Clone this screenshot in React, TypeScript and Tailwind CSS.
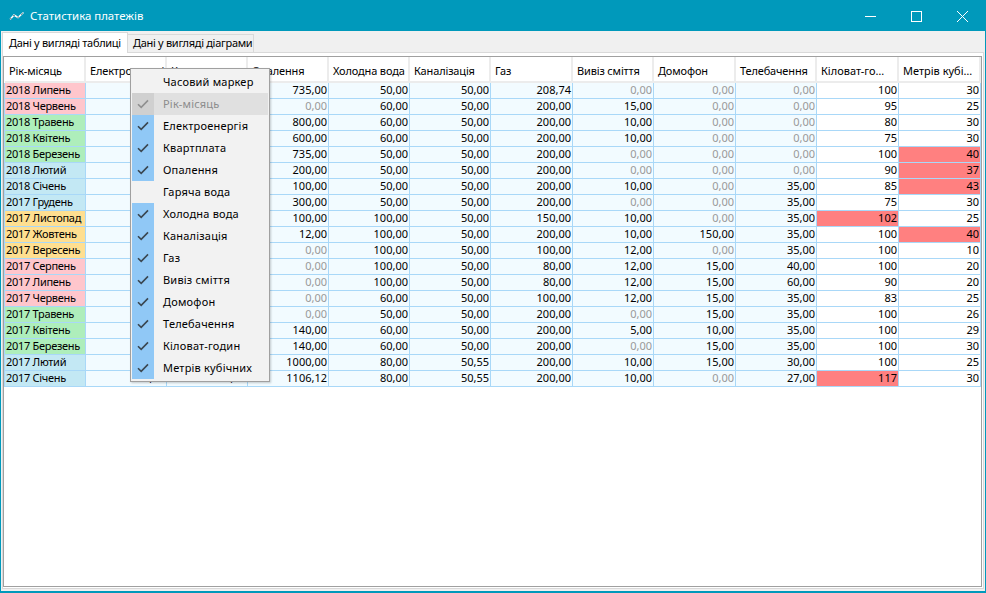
import React from 'react';

type Row = { label: string; tone: string; cells: string[] };

const toneClass: Record<string, string> = {
  pink: 'bg-[#ffc6cc]',
  green: 'bg-[#aeeebb]',
  blue: 'bg-[#c3e8f4]',
  yellow: 'bg-[#ffdf90]',
};

const headers = [
  'Рік-місяць',
  'Електроенергія',
  'Квартплата',
  'Опалення',
  'Холодна вода',
  'Каналізація',
  'Газ',
  'Вивіз сміття',
  'Домофон',
  'Телебачення',
  'Кіловат-го…',
  'Метрів кубі…',
];

const rows: Row[] = [
  { label: '2018 Липень', tone: 'pink', cells: ['735,00', '50,00', '50,00', '208,74', '0,00', '0,00', '0,00', '100', '30'] },
  { label: '2018 Червень', tone: 'pink', cells: ['0,00', '60,00', '50,00', '200,00', '15,00', '0,00', '0,00', '95', '25'] },
  { label: '2018 Травень', tone: 'green', cells: ['800,00', '60,00', '50,00', '200,00', '10,00', '0,00', '0,00', '80', '30'] },
  { label: '2018 Квітень', tone: 'green', cells: ['600,00', '60,00', '50,00', '200,00', '10,00', '0,00', '0,00', '75', '30'] },
  { label: '2018 Березень', tone: 'green', cells: ['735,00', '50,00', '50,00', '200,00', '0,00', '0,00', '0,00', '100', '40!'] },
  { label: '2018 Лютий', tone: 'blue', cells: ['200,00', '50,00', '50,00', '200,00', '0,00', '0,00', '0,00', '90', '37!'] },
  { label: '2018 Січень', tone: 'blue', cells: ['100,00', '50,00', '50,00', '200,00', '10,00', '0,00', '35,00', '85', '43!'] },
  { label: '2017 Грудень', tone: 'blue', cells: ['300,00', '50,00', '50,00', '200,00', '0,00', '0,00', '35,00', '75', '30'] },
  { label: '2017 Листопад', tone: 'yellow', cells: ['100,00', '100,00', '50,00', '150,00', '10,00', '0,00', '35,00', '102!', '25'] },
  { label: '2017 Жовтень', tone: 'yellow', cells: ['12,00', '100,00', '50,00', '200,00', '10,00', '150,00', '35,00', '100', '40!'] },
  { label: '2017 Вересень', tone: 'yellow', cells: ['0,00', '100,00', '50,00', '100,00', '12,00', '0,00', '35,00', '100', '10'] },
  { label: '2017 Серпень', tone: 'pink', cells: ['0,00', '100,00', '50,00', '80,00', '12,00', '15,00', '40,00', '100', '20'] },
  { label: '2017 Липень', tone: 'pink', cells: ['0,00', '100,00', '50,00', '80,00', '12,00', '15,00', '60,00', '90', '20'] },
  { label: '2017 Червень', tone: 'pink', cells: ['0,00', '60,00', '50,00', '100,00', '12,00', '15,00', '35,00', '83', '25'] },
  { label: '2017 Травень', tone: 'green', cells: ['0,00', '50,00', '50,00', '200,00', '0,00', '15,00', '35,00', '100', '26'] },
  { label: '2017 Квітень', tone: 'green', cells: ['140,00', '60,00', '50,00', '200,00', '5,00', '10,00', '35,00', '100', '29'] },
  { label: '2017 Березень', tone: 'green', cells: ['140,00', '60,00', '50,00', '200,00', '0,00', '15,00', '35,00', '100', '30'] },
  { label: '2017 Лютий', tone: 'blue', cells: ['1000,00', '80,00', '50,55', '200,00', '10,00', '15,00', '30,00', '100', '25'] },
  { label: '2017 Січень', tone: 'blue', cells: ['1106,12', '80,00', '50,55', '200,00', '10,00', '0,00', '27,00', '117!', '30'] },
];

const menuItems = [
  { label: 'Часовий маркер', state: 'off' },
  { label: 'Рік-місяць', state: 'disabled' },
  { label: 'Електроенергія', state: 'on' },
  { label: 'Квартплата', state: 'on' },
  { label: 'Опалення', state: 'on' },
  { label: 'Гаряча вода', state: 'off' },
  { label: 'Холодна вода', state: 'on' },
  { label: 'Каналізація', state: 'on' },
  { label: 'Газ', state: 'on' },
  { label: 'Вивіз сміття', state: 'on' },
  { label: 'Домофон', state: 'on' },
  { label: 'Телебачення', state: 'on' },
  { label: 'Кіловат-годин', state: 'on' },
  { label: 'Метрів кубічних', state: 'on' },
];

const gridCols = 'grid grid-cols-[82px_81px_81px_81px_81px_81px_82px_81px_82px_81px_82px_82px]';

const CheckMark = ({ color }: { color: string }) => (
  <svg width="12" height="10" viewBox="0 0 12 10" fill="none" stroke={color} strokeWidth="1.6">
    <path d="M1 5.2 L4.2 8.4 L11 1.4" />
  </svg>
);

const DataCell = ({ value, index }: { value: string; index: number }) => {
  const alert = value.endsWith('!');
  const text = alert ? value.slice(0, -1) : value;
  const plain = index >= 7;
  const muted = text === '0,00';
  return (
    <div
      className={`h-4 border-r border-b border-[#a9d8f8] pr-[1px] text-right leading-[14px] ${
        alert ? 'bg-[#ff8080]' : plain ? 'bg-white' : 'bg-[#f2fbff]'
      } ${muted ? 'text-[#999999]' : 'text-black'}`}
    >
      {text}
    </div>
  );
};

const ColumnMenu = () => (
  <div className="absolute left-[129px] top-[67px] z-20 w-[140px] border border-[#a0a0a0] bg-[#f2f2f2] px-[1px] py-[2px] shadow-[1px_1px_2px_rgba(0,0,0,0.2)]">
    {menuItems.map((item) => (
      <div
        key={item.label}
        className={`flex h-[22px] items-center ${item.state === 'disabled' ? 'bg-[#e0e0e0] text-[#8c8c8c]' : 'text-black'}`}
      >
        <div
          className={`flex h-[22px] w-[22px] shrink-0 items-center justify-center ${
            item.state === 'on' ? 'bg-[#90c8f6]' : item.state === 'disabled' ? 'bg-[#d0d0d0]' : ''
          }`}
        >
          {item.state === 'on' && <CheckMark color="#3a4650" />}
          {item.state === 'disabled' && <CheckMark color="#8f8f8f" />}
        </div>
        <span className="ml-[9px] whitespace-nowrap tracking-[0.2px]">{item.label}</span>
      </div>
    ))}
  </div>
);

const App: React.FC = () => {
  return (
    <div className="relative flex h-[593px] w-[986px] flex-col overflow-hidden border border-b-2 border-[#0099bb] bg-[#f0f0f0] font-['Noto_Sans',sans-serif] text-[11px] text-black">
      <div className="flex h-[30px] shrink-0 items-center bg-[#0099bb] text-white">
        <svg className="ml-[8px]" width="16" height="10" viewBox="0 0 16 10" fill="none">
          <path d="M1 8.5 L5 4 L9 6.5 L14.5 1.5" stroke="#ffffff" strokeWidth="1.5" />
          <path d="M1 8.5 L5 4 L9 6.5 L14.5 1.5" stroke="#1d3b44" strokeWidth="0.8" strokeDasharray="2 3" />
        </svg>
        <span className="ml-[5px] text-[11.4px]">Статистика платежів</span>
        <div className="ml-auto flex items-center">
          <svg width="46" height="30" viewBox="0 0 46 30" stroke="#ffffff" fill="none">
            <path d="M18 15.5 H29" />
          </svg>
          <svg width="46" height="30" viewBox="0 0 46 30" stroke="#ffffff" fill="none">
            <rect x="18.5" y="10.5" width="10" height="10" />
          </svg>
          <svg width="46" height="30" viewBox="0 0 46 30" stroke="#ffffff" fill="none">
            <path d="M18 10 L29 21 M29 10 L18 21" />
          </svg>
        </div>
      </div>

      <div className="relative z-10 -mb-px flex h-[22px] shrink-0 items-end whitespace-nowrap pl-[1px] tracking-[-0.3px]">
        <div className="flex h-[21px] w-[126px] items-center border-x border-t border-[#d9d9d9] bg-white pl-[6px]">
          Дані у вигляді таблиці
        </div>
        <div className="flex h-[19px] w-[126px] items-center border-y border-r border-[#d9d9d9] pl-[5px]">
          Дані у вигляді діаграми
        </div>
      </div>

      <div className="mx-[1px] mb-[2px] flex-1 border border-[#d9d9d9] bg-white pb-[1px] pt-[3px]">
        <div className="h-full w-[979px] border border-[#a0a0a0] bg-white">
          <div className={gridCols}>
            {headers.map((title, index) => (
              <div
                key={title}
                className={`h-[26px] overflow-hidden whitespace-nowrap border-r-2 border-b-2 border-[#ececec] pl-[4px] leading-[28px] ${
                  index === 0 ? 'ml-[1px]' : ''
                } ${index < 10 ? 'tracking-[-0.15px]' : ''}`}
              >
                {title}
              </div>
            ))}
          </div>
          {rows.map((row, rowIndex) => (
            <div key={row.label} className={gridCols}>
              <div className={`h-4 border-x border-b border-[#a9d8f8] pl-[1px] leading-[14px] tracking-[-0.3px] ${toneClass[row.tone]}`}>
                {row.label}
              </div>
              <div className="h-4 border-r border-b border-[#a9d8f8] bg-[#f2fbff] pr-[1px] text-right leading-[14px]">
                {rowIndex === rows.length - 1 ? '66,00' : ''}
              </div>
              <div className="h-4 border-r border-b border-[#a9d8f8] bg-[#f2fbff] pr-[1px] text-right leading-[14px]">
                {rowIndex === rows.length - 1 ? '66,00' : ''}
              </div>
              {row.cells.map((value, index) => (
                <DataCell key={index} value={value} index={index} />
              ))}
            </div>
          ))}
        </div>
      </div>

      <ColumnMenu />
    </div>
  );
};

export default App;
